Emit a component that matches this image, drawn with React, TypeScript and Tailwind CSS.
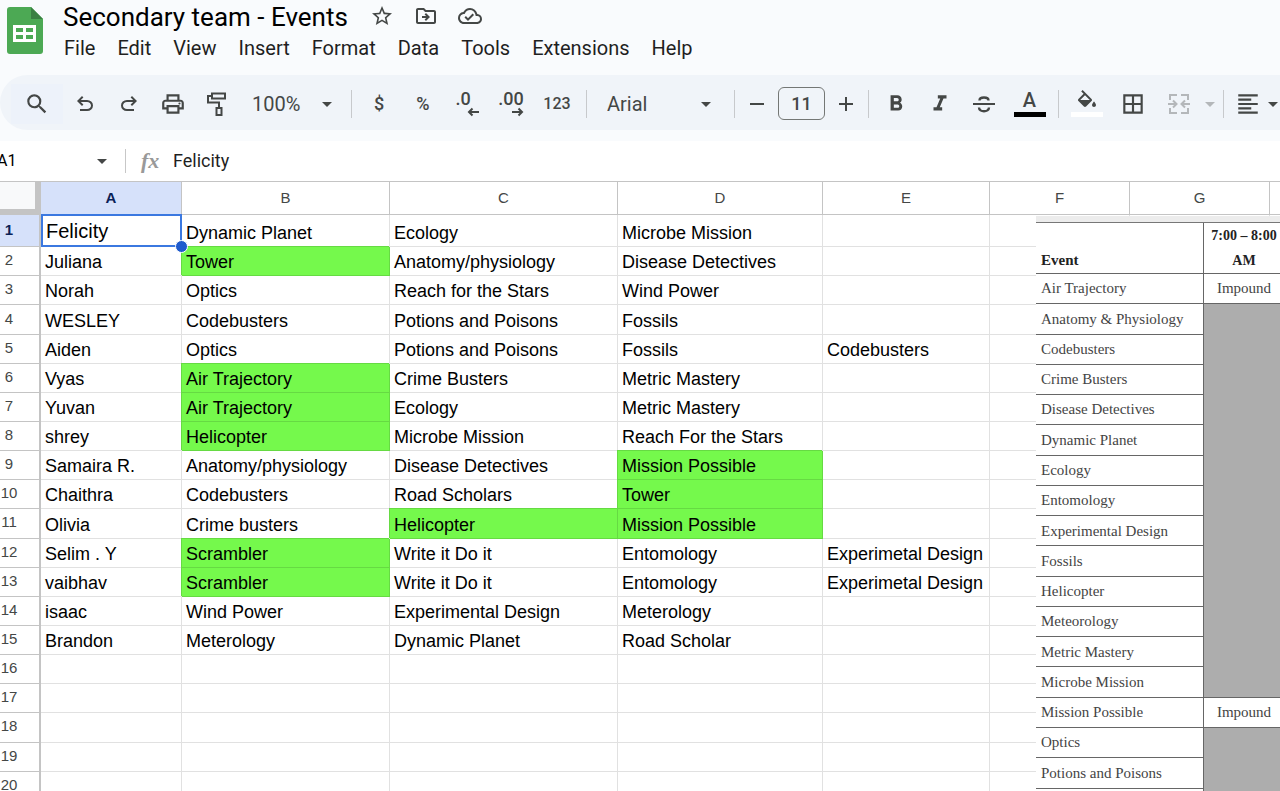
import React from "react";
import {
  MdArrowDropDown,
  MdBorderAll,
  MdFormatAlignLeft,
  MdFormatBold,
  MdFormatItalic,
  MdOutlineCloudDone,
  MdOutlineDriveFileMove,
  MdOutlinePrint,
  MdSearch,
  MdStarBorder,
} from "react-icons/md";

interface Column {
  letter: string;
  width: string;
}

interface ScheduleRow {
  event: string;
  slot?: string;
}

const menus = ["File", "Edit", "View", "Insert", "Format", "Data", "Tools", "Extensions", "Help"];

const columns: Column[] = [
  { letter: "A", width: "w-[141px]" },
  { letter: "B", width: "w-[208px]" },
  { letter: "C", width: "w-[228px]" },
  { letter: "D", width: "w-[205px]" },
  { letter: "E", width: "w-[167px]" },
  { letter: "F", width: "w-[140px]" },
  { letter: "G", width: "w-[140px]" },
  { letter: "", width: "" },
];

// A leading "*" marks a highlighted cell
const rows: string[][] = [
  ["Felicity", "Dynamic Planet", "Ecology", "Microbe Mission"],
  ["Juliana", "*Tower", "Anatomy/physiology", "Disease Detectives"],
  ["Norah", "Optics", "Reach for the Stars", "Wind Power"],
  ["WESLEY", "Codebusters", "Potions and Poisons", "Fossils"],
  ["Aiden", "Optics", "Potions and Poisons", "Fossils", "Codebusters"],
  ["Vyas", "*Air Trajectory", "Crime Busters", "Metric Mastery"],
  ["Yuvan", "*Air Trajectory", "Ecology", "Metric Mastery"],
  ["shrey", "*Helicopter", "Microbe Mission", "Reach For the Stars"],
  ["Samaira R.", "Anatomy/physiology", "Disease Detectives", "*Mission Possible"],
  ["Chaithra", "Codebusters", "Road Scholars", "*Tower"],
  ["Olivia", "Crime busters", "*Helicopter", "*Mission Possible"],
  ["Selim . Y", "*Scrambler", "Write it Do it", "Entomology", "Experimetal Design"],
  ["vaibhav", "*Scrambler", "Write it Do it", "Entomology", "Experimetal Design"],
  ["isaac", "Wind Power", "Experimental Design", "Meterology"],
  ["Brandon", "Meterology", "Dynamic Planet", "Road Scholar"],
  [],
  [],
  [],
  [],
  [],
];

const schedule: ScheduleRow[] = [
  { event: "Air Trajectory", slot: "Impound" },
  { event: "Anatomy & Physiology" },
  { event: "Codebusters" },
  { event: "Crime Busters" },
  { event: "Disease Detectives" },
  { event: "Dynamic Planet" },
  { event: "Ecology" },
  { event: "Entomology" },
  { event: "Experimental Design" },
  { event: "Fossils" },
  { event: "Helicopter" },
  { event: "Meteorology" },
  { event: "Metric Mastery" },
  { event: "Microbe Mission" },
  { event: "Mission Possible", slot: "Impound" },
  { event: "Optics" },
  { event: "Potions and Poisons" },
  { event: "" },
];

const SheetsLogo = () => (
  <svg viewBox="0 0 36 48" className="h-12 w-9 shrink-0" aria-hidden="true">
    <path d="M3 0h21l12 12v32a3 3 0 0 1-3 3H3a3 3 0 0 1-3-3V3a3 3 0 0 1 3-3z" fill="#4ca954" />
    <path d="M24 0l12 12H24z" fill="#3a8042" />
    <path
      d="M6 18h23v17H6zM9 21v4h7v-4zM19 21v4h7v-4zM9 28v4h7v-4zM19 28v4h7v-4z"
      fill="#fff"
      fillRule="evenodd"
    />
  </svg>
);

const UndoIcon = ({ flip = false }: { flip?: boolean }) => (
  <svg viewBox="0 0 24 24" className={flip ? "size-6 -scale-x-100" : "size-6"} fill="currentColor">
    <path d="M7 19v-2h7.1q1.575 0 2.738-1T18 13.5 16.838 11 14.1 10H7.8l2.6 2.6L9 14 4 9l5-5 1.4 1.4L7.8 8h6.3q2.425 0 4.163 1.575T20 13.5t-1.737 3.925T14.1 19z" />
  </svg>
);

const PaintIcon = () => (
  <svg viewBox="0 0 24 26" className="h-[26px] w-6" fill="none" stroke="currentColor" strokeWidth="2">
    <path d="M7 2.5h13v5H7zM7 5H3v6.500h11V17M11.500 17h5v7h-5z" />
  </svg>
);

const StrikeIcon = () => (
  <svg viewBox="0 0 24 24" className="size-6" fill="none" stroke="currentColor" strokeWidth="2">
    <path d="M1 12h22" />
    <path d="M7.500 8.500c0-4 9-4 9 0M7 15.500c0 5 10 5 10 0" strokeWidth="2.400" />
  </svg>
);

const FillIcon = () => (
  <svg viewBox="0 0 24 18" className="h-[18px] w-6" fill="currentColor">
    <path d="M16.56 8.94L7.62 0 6.21 1.41l2.38 2.38-5.15 5.15c-.59.59-.59 1.54 0 2.12l5.5 5.5c.29.29.68.44 1.06.44s.77-.15 1.06-.44l5.5-5.5c.59-.58.59-1.53 0-2.12zM5.21 10L10 5.21 14.79 10H5.21zM19 11.500s-2 2.170-2 3.500c0 1.100.9 2 2 2s2-.9 2-2c0-1.330-2-3.500-2-3.500z" />
  </svg>
);

const MergeIcon = () => (
  <svg viewBox="0 0 24 24" className="size-6" fill="none" stroke="currentColor" strokeWidth="2">
    <path d="M10 3H3v5M14 3h7v5M10 21H3v-5M14 21h7v-5" />
    <path d="M1 12h8M6 8.500L9.500 12 6 15.500M23 12h-8M18 8.500L14.500 12l3.500 3.500" />
  </svg>
);

const ArrowIcon = ({ flip = false }: { flip?: boolean }) => (
  <svg
    viewBox="0 0 12 10"
    className={flip ? "h-2.5 w-3 -scale-x-100" : "h-2.5 w-3"}
    fill="none"
    stroke="currentColor"
    strokeWidth="2"
  >
    <path d="M12 5H2M5.500 1.500L2 5l3.500 3.500" />
  </svg>
);

const Caret = () => <MdArrowDropDown className="pointer-events-none size-6 shrink-0" />;

const Divider = () => <div className="mx-[5px] h-7 w-px shrink-0 bg-[#c7c9cc]" />;

interface ToolProps {
  label: string;
  width?: string;
  children: React.ReactNode;
}

const Tool = ({ label, width = "w-11", children }: ToolProps) => (
  <button
    type="button"
    aria-label={label}
    className={`flex h-10 shrink-0 items-center justify-center ${width}`}
  >
    {children}
  </button>
);

const Header = () => (
  <header className="flex h-[75px] gap-5 pt-[7px] pl-[7px]">
    <SheetsLogo />
    <div className="-mt-[7px]">
      <div className="flex h-[34px] items-center">
        <h1 className="text-[26px] whitespace-nowrap text-black">Secondary team - Events</h1>
        <div className="mb-0.5 ml-[22px] flex items-center gap-5 text-[#444746]">
          <button type="button" aria-label="Star">
            <MdStarBorder className="size-6" />
          </button>
          <button type="button" aria-label="Move">
            <MdOutlineDriveFileMove className="size-6" />
          </button>
          <button type="button" aria-label="Document status">
            <MdOutlineCloudDone className="size-6" />
          </button>
        </div>
      </div>
      <nav className="-ml-[10px] flex h-7 items-center text-xl text-[#1f1f1f]">
        {menus.map((menu) => (
          <button key={menu} type="button" className="px-[11px]">
            {menu}
          </button>
        ))}
      </nav>
    </div>
  </header>
);

const Toolbar = () => (
  <div
    role="toolbar"
    className="flex h-[55px] items-center overflow-hidden rounded-l-full bg-[#f0f4f9] pt-0.5 pl-[11px] text-[#444746]"
  >
    <button
      type="button"
      aria-label="Search the menus"
      className="flex h-10 w-[52px] shrink-0 items-center justify-center bg-[#edf2fa]"
    >
      <MdSearch className="size-[26px]" />
    </button>
    <Tool label="Undo">
      <UndoIcon />
    </Tool>
    <Tool label="Redo">
      <UndoIcon flip />
    </Tool>
    <Tool label="Print">
      <MdOutlinePrint className="size-[26px]" />
    </Tool>
    <Tool label="Paint format">
      <PaintIcon />
    </Tool>
    <div className="flex w-[107px] shrink-0 items-center pl-[13px]">
      <select aria-label="Zoom" className="w-[63px] appearance-none text-xl outline-none">
        <option>100%</option>
      </select>
      <Caret />
    </div>
    <Divider />
    <Tool label="Format as currency">
      <span className="text-lg font-medium">$</span>
    </Tool>
    <Tool label="Format as percent">
      <span className="text-lg font-medium">%</span>
    </Tool>
    <Tool label="Decrease decimal places">
      <span className="flex flex-col items-end">
        <span className="pr-2 text-lg leading-4 font-medium">.0</span>
        <ArrowIcon />
      </span>
    </Tool>
    <Tool label="Increase decimal places">
      <span className="flex flex-col items-end">
        <span className="text-lg leading-4 font-medium">.00</span>
        <ArrowIcon flip />
      </span>
    </Tool>
    <Tool label="More formats" width="w-12">
      <span className="text-base font-medium">123</span>
    </Tool>
    <Divider />
    <div className="flex w-[137px] shrink-0 items-center pl-[15px]">
      <select aria-label="Font" className="w-[87px] appearance-none text-xl outline-none">
        <option>Arial</option>
      </select>
      <Caret />
    </div>
    <Divider />
    <Tool label="Decrease font size" width="w-[34px]">
      <span className="h-0.5 w-3.5 bg-[#444746]" />
    </Tool>
    <input
      aria-label="Font size"
      defaultValue="11"
      className="mx-1 h-[33px] w-[47px] shrink-0 rounded-md border border-[#747775] text-center text-lg font-medium outline-none"
    />
    <Tool label="Increase font size" width="w-[34px]">
      <svg viewBox="0 0 14 14" className="size-3.5" stroke="currentColor" strokeWidth="2">
        <path d="M0 7h14M7 0v14" />
      </svg>
    </Tool>
    <Divider />
    <Tool label="Bold">
      <MdFormatBold className="size-[26px]" />
    </Tool>
    <Tool label="Italic">
      <MdFormatItalic className="size-[26px]" />
    </Tool>
    <Tool label="Strikethrough">
      <StrikeIcon />
    </Tool>
    <Tool label="Text color" width="w-[47px]">
      <span className="flex flex-col items-center gap-0.5">
        <span className="text-xl leading-5 font-medium">A</span>
        <span className="h-[5px] w-8 bg-black" />
      </span>
    </Tool>
    <Divider />
    <Tool label="Fill color" width="w-[46px]">
      <span className="flex flex-col items-center gap-1">
        <FillIcon />
        <span className="h-[5px] w-8 bg-white" />
      </span>
    </Tool>
    <Tool label="Borders" width="w-[46px]">
      <MdBorderAll className="size-[26px]" />
    </Tool>
    <div className="flex shrink-0 text-[#b4b7ba]">
      <Tool label="Merge cells" width="w-[46px]">
        <MergeIcon />
      </Tool>
      <Tool label="Select merge type" width="w-4">
        <Caret />
      </Tool>
    </div>
    <Divider />
    <Tool label="Horizontal align" width="w-[38px]">
      <MdFormatAlignLeft className="size-[26px]" />
    </Tool>
    <Tool label="Align options" width="w-3">
      <Caret />
    </Tool>
  </div>
);

const FormulaBar = () => (
  <div className="mt-[11px] flex h-10 items-center bg-white">
    <input
      aria-label="Name box"
      defaultValue="A1"
      className="-ml-[3px] w-[93px] shrink-0 text-base text-black outline-none"
    />
    <button type="button" aria-label="Named ranges" className="text-[#444746]">
      <Caret />
    </button>
    <div className="mx-[11px] h-6 w-px bg-[#c7c7c7]" />
    <label
      htmlFor="formula"
      className="mx-1 w-6 font-['Liberation_Serif',serif] text-[22px] leading-6 font-bold text-[#999] italic"
    >
      fx
    </label>
    <input
      id="formula"
      defaultValue="Felicity"
      className="ml-1 min-w-0 flex-1 text-lg text-[#1f1f1f] outline-none"
    />
  </div>
);

const Cell = ({ value = "" }: { value?: string }) => {
  const marked = value.startsWith("*");
  return (
    <td
      className={`border-r border-b pl-1 align-bottom leading-[26px] whitespace-nowrap ${
        marked
          ? "border-[#66da43] bg-[#75f94c] shadow-[-1px_-1px_0_#66da43]"
          : "border-[#e1e1e1]"
      }`}
    >
      {marked ? value.slice(1) : value}
    </td>
  );
};

const ActiveCell = ({ value }: { value: string }) => (
  <td className="relative border-r border-b border-[#e1e1e1]">
    <div className="absolute -top-px right-[-1px] -bottom-px left-0 flex items-center border-2 border-[#3b78e0] bg-white pl-[3px] text-xl">
      {value}
    </div>
    <div className="absolute -right-[7px] -bottom-[7px] z-10 size-[13px] rounded-full border border-white bg-[#1f5bcd]" />
  </td>
);

const Grid = () => (
  <table className="h-[620px] w-full min-w-[1320px] table-fixed border-separate border-spacing-0 text-lg text-black">
    <thead>
      <tr className="h-[34px] text-[15px] text-[#444746]">
        <th className="w-[41px] border-t border-r-6 border-b-6 border-t-[#c4c4c4] border-r-[#c4c4c4] border-b-[#c4c4c4] bg-[#f8f9fa]" />
        {columns.map(({ letter, width }) => (
          <th
            key={letter}
            scope="col"
            className={`border-t border-r border-b border-[#c4c4c4] ${width} ${
              letter === "A" ? "bg-[#d6e1fa] font-bold text-[#0b2257]" : "font-normal"
            }`}
          >
            {letter}
          </th>
        ))}
      </tr>
    </thead>
    <tbody>
      {rows.map((row, index) => (
        <tr key={index} className={index === 0 ? "h-8" : "h-[29px]"}>
          <th
            scope="row"
            className={`border-r-2 border-b border-[#c4c4c4] pr-[21px] pb-0.5 text-[15px] leading-6 ${
              index === 0 ? "bg-[#d6e1fa] font-bold text-[#0b2257]" : "font-normal text-[#444746]"
            }`}
          >
            {index + 1}
          </th>
          {columns.map(({ letter }, col) =>
            index === 0 && col === 0 ? (
              <ActiveCell key={letter} value={row[0]} />
            ) : (
              <Cell key={letter} value={row[col]} />
            )
          )}
        </tr>
      ))}
    </tbody>
  </table>
);

/* Schedule picture that floats over columns F and G */
const Schedule = () => (
  <div className="absolute top-[35px] left-[1036px] w-[248px] border-t-6 border-[#ececec] bg-white font-['Liberation_Serif',serif] text-[15px] text-[#444]">
    <table className="h-[597px] w-full table-fixed border-separate border-spacing-0 border-t border-[#777]">
      <thead>
        <tr className="h-[50px] leading-[25px] text-[#222]">
          <th className="w-[168px] border-r border-b border-[#666] pl-[5px] text-left align-bottom">
            Event
          </th>
          <th className="border-b border-[#666] px-1 align-bottom text-sm leading-[25px]">
            7:00 – 8:00 AM
          </th>
        </tr>
      </thead>
      <tbody>
        {schedule.map(({ event, slot }, index) => (
          <tr key={event} className="h-[30px]">
            <td className="border-r border-b border-[#666] pl-[5px]">{event}</td>
            {slot ? (
              <td className="border-b border-[#666] text-center">{slot}</td>
            ) : (
              <td
                className={`bg-[#adadad] ${
                  schedule[index + 1]?.slot ? "border-b border-[#666]" : ""
                }`}
              />
            )}
          </tr>
        ))}
      </tbody>
    </table>
  </div>
);

const App: React.FC = () => {
  return (
    <div className="flex h-screen flex-col overflow-hidden bg-[#f9fbfd] font-[Roboto,sans-serif]">
      <Header />
      <Toolbar />
      <FormulaBar />
      <main className="relative min-h-0 flex-1 overflow-hidden bg-white font-['Liberation_Sans',Arial,sans-serif]">
        <Grid />
        <Schedule />
      </main>
    </div>
  );
};

export default App;
